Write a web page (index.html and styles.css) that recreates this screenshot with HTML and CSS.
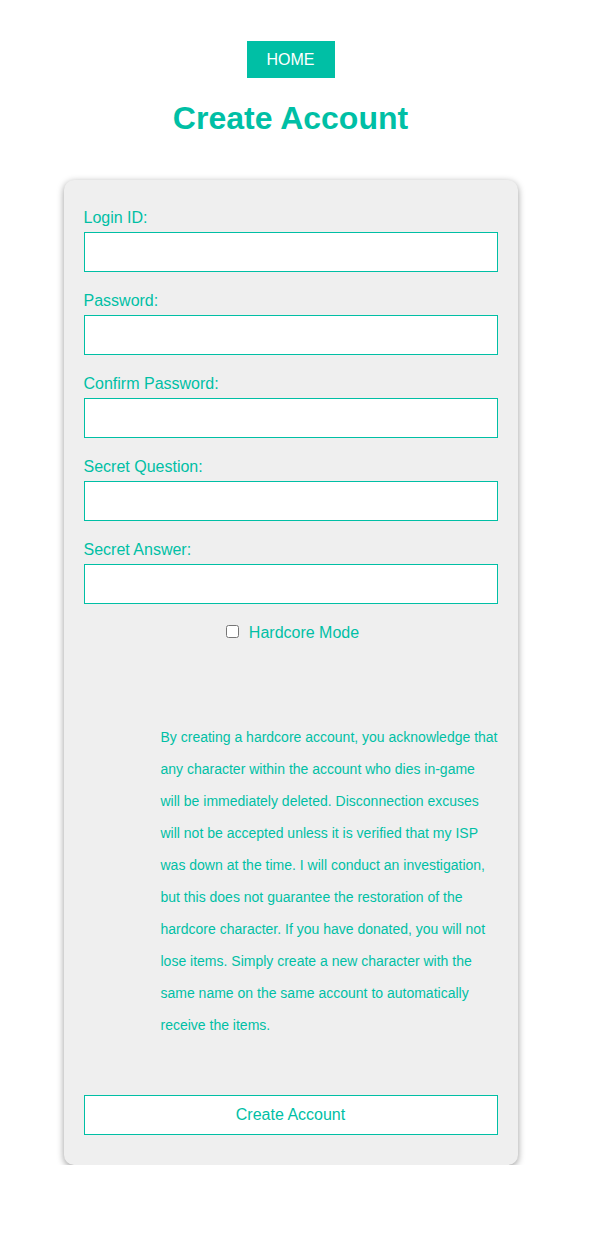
FILE: index.html
```html
<!DOCTYPE html>
<html lang="en">
<head>
<meta charset="utf-8">
<title>Create Account</title>
<link rel="stylesheet" href="styles.css">
</head>
<body>
<div class="page">
  <a class="home" href="#">HOME</a>
  <h1 class="title">Create Account</h1>
  <form class="card">
    <div class="field">
      <label class="label" for="login">Login ID:</label>
      <input class="input" id="login" type="text">
    </div>
    <div class="field">
      <label class="label" for="pw">Password:</label>
      <input class="input" id="pw" type="password">
    </div>
    <div class="field">
      <label class="label" for="pw2">Confirm Password:</label>
      <input class="input" id="pw2" type="password">
    </div>
    <div class="field">
      <label class="label" for="sq">Secret Question:</label>
      <input class="input" id="sq" type="text">
    </div>
    <div class="field">
      <label class="label" for="sa">Secret Answer:</label>
      <input class="input" id="sa" type="text">
    </div>
    <div class="check-row">
      <input class="check" id="hc" type="checkbox"><label class="check-label" for="hc">Hardcore Mode</label>
    </div>
    <p class="notice">By creating a hardcore account, you acknowledge that any character within the account who dies in-game will be immediately deleted. Disconnection excuses will not be accepted unless it is verified that my ISP was down at the time. I will conduct an investigation, but this does not guarantee the restoration of the hardcore character. If you have donated, you will not lose items. Simply create a new character with the same name on the same account to automatically receive the items.</p>
    <button class="submit" type="button">Create Account</button>
  </form>
</div>
</body>
</html>
```
FILE: styles.css
```css
* { box-sizing: border-box; }
html, body { margin: 0; padding: 0; background: #ffffff; }
body {
  font-family: "Liberation Sans", Arial, sans-serif;
  color: #00bfa5;
}
.page {
  display: flex;
  flex-direction: column;
  align-items: center;
  padding: 41px 8px 0 0;
}
.home {
  display: block;
  background: #00bfa5;
  color: #ffffff;
  text-decoration: none;
  font-size: 16px;
  line-height: 18px;
  padding: 10px 20px 9px;
}
.title {
  margin: 22px 0 0;
  font-size: 32px;
  line-height: 37px;
  font-weight: bold;
  color: #00bfa5;
}
.card {
  margin-top: 43px;
  width: 454px;
  background: #efefef;
  border-radius: 10px;
  box-shadow: 0 2px 7px rgba(0, 0, 0, 0.4);
  padding: 29px 20px 30px;
  display: flex;
  flex-direction: column;
}
.field {
  display: flex;
  flex-direction: column;
  margin-bottom: 20px;
}
.label {
  font-size: 16px;
  line-height: 18px;
  margin-bottom: 5px;
}
.input {
  height: 40px;
  border: 1px solid #00bfa5;
  background: #ffffff;
  outline: none;
  font-family: inherit;
  font-size: 16px;
  padding: 0 8px;
  margin: 0;
}
.check-row {
  text-align: center;
  font-size: 16px;
  line-height: 18px;
  margin-top: -2px;
}
.check {
  margin: 3px 10px 3px 4px;
  width: 13px;
  height: 13px;
}
.check-label {
  font-size: 16px;
}
.notice {
  margin: 79px 0 0 77px;
  font-size: 14px;
  line-height: 32px;
}
.submit {
  margin-top: 54px;
  height: 40px;
  background: #ffffff;
  border: 1px solid #00bfa5;
  color: #00bfa5;
  font-family: inherit;
  font-size: 16px;
  cursor: pointer;
}
```
